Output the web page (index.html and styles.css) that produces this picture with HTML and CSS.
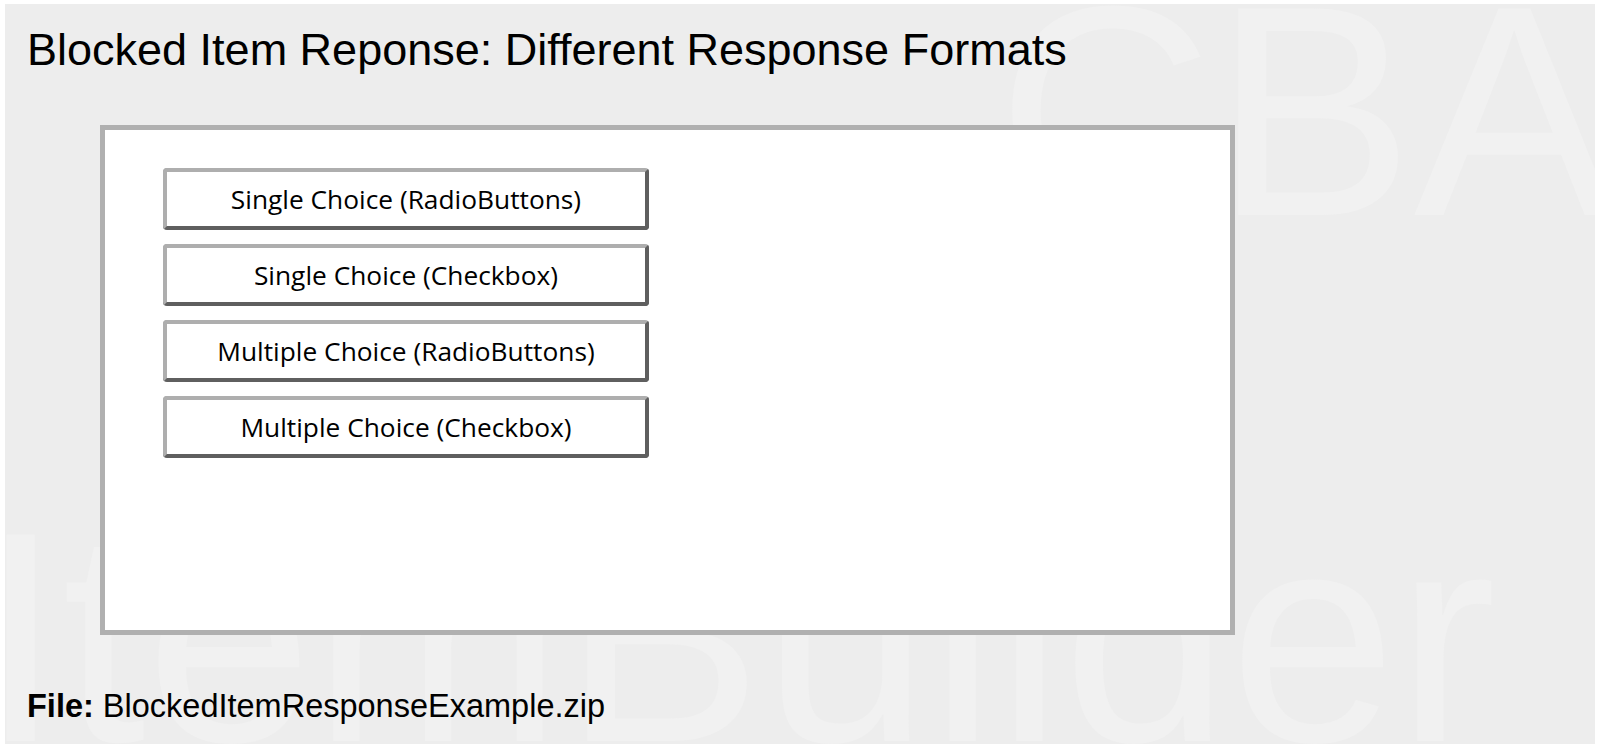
FILE: index.html
```html
<!DOCTYPE html>
<html lang="en">
<head>
<meta charset="utf-8">
<title>Blocked Item Reponse: Different Response Formats</title>
<link rel="stylesheet" href="styles.css">
</head>
<body>
<div class="page">
  <div class="watermark watermark-cba" aria-hidden="true">CBA</div>
  <div class="watermark watermark-ib" aria-hidden="true">ItemBuilder</div>
  <h1 class="title">Blocked Item Reponse: Different Response Formats</h1>
  <div class="panel">
    <div class="button-list">
      <button class="choice-btn" type="button">Single Choice (RadioButtons)</button>
      <button class="choice-btn" type="button">Single Choice (Checkbox)</button>
      <button class="choice-btn" type="button">Multiple Choice (RadioButtons)</button>
      <button class="choice-btn" type="button">Multiple Choice (Checkbox)</button>
    </div>
  </div>
  <p class="file-line"><strong>File:</strong> BlockedItemResponseExample.zip</p>
</div>
</body>
</html>
```
FILE: styles.css
```css
html, body {
  margin: 0;
  padding: 0;
  background: #ffffff;
}

body {
  padding: 4px 5px 6px 5px;
}

.page {
  position: relative;
  overflow: hidden;
  height: 740px;
  background: #ededed;
  padding-left: 22px;
  box-sizing: border-box;
  font-family: "Liberation Sans", Arial, sans-serif;
  color: #000;
}

.watermark {
  position: absolute;
  font-family: "Liberation Sans", Arial, sans-serif;
  font-size: 300px;
  line-height: 1;
  color: #f1f1f1;
  white-space: nowrap;
  pointer-events: none;
  user-select: none;
}

.watermark-cba {
  left: 992px;
  top: -43px;
}

.watermark-ib {
  left: -26px;
  top: 483px;
}

.title {
  position: relative;
  margin: 20px 0 0 0;
  font-size: 45px;
  line-height: 52px;
  font-weight: normal;
}

.panel {
  position: relative;
  box-sizing: border-box;
  width: 1135px;
  height: 510px;
  margin: 49px 0 0 73px;
  background: #fff;
  border: 5px solid #b0b0b0;
  padding: 38px 0 0 58px;
}

.button-list {
  display: flex;
  flex-direction: column;
  gap: 14px;
}

.choice-btn {
  box-sizing: border-box;
  width: 486px;
  height: 62px;
  display: flex;
  align-items: center;
  justify-content: center;
  padding: 0;
  background: #fff;
  border-style: solid;
  border-width: 4px;
  border-color: #aeaeae #5f5f5f #5f5f5f #aeaeae;
  border-radius: 4px;
  font-family: "Open Sans", "Noto Sans", sans-serif;
  font-size: 26.3px;
  color: #000;
  cursor: pointer;
}

.file-line {
  position: relative;
  margin: 53px 0 0 0;
  font-size: 32.5px;
  line-height: 37px;
}

.file-line strong {
  font-weight: bold;
}
```
